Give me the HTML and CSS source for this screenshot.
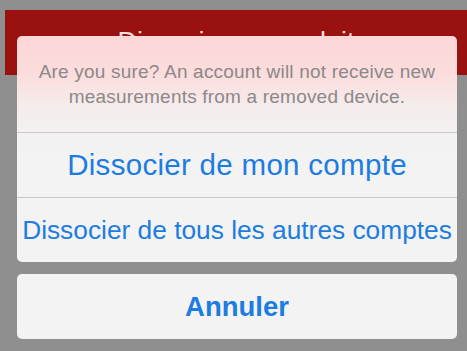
FILE: index.html
```html
<!DOCTYPE html>
<html lang="fr">
<head>
<meta charset="utf-8">
<link rel="stylesheet" href="styles.css">
</head>
<body>
<div class="screen">
  <header class="navbar"><span class="nav-title">Dissocier ce produit</span></header>
  <div class="sheet">
    <div class="group">
      <p class="message">Are you sure? An account will not receive new measurements from a removed device.</p>
      <div class="action">Dissocier de mon compte</div>
      <div class="action action-long">Dissocier de tous les autres comptes</div>
    </div>
    <div class="group cancel">
      <div class="action action-bold">Annuler</div>
    </div>
  </div>
</div>
</body>
</html>
```
FILE: styles.css
```css
html, body {
  margin: 0;
  padding: 0;
}
body {
  width: 467px;
  height: 351px;
  overflow: hidden;
  background: #8f8f8f;
  font-family: "Liberation Sans", Arial, sans-serif;
}
.screen {
  position: relative;
  height: 351px;
  padding-top: 10px;
  box-sizing: border-box;
}
.navbar {
  margin-left: 5px;
  height: 65px;
  background: #9a1210;
  display: flex;
  align-items: center;
  justify-content: center;
}
.nav-title {
  color: #f4dede;
  font-size: 27px;
}
.sheet {
  position: absolute;
  left: 17px;
  top: 36px;
  width: 440px;
  display: flex;
  flex-direction: column;
  gap: 12px;
}
.group {
  border-radius: 5px;
  overflow: hidden;
  background: #f3f3f3;
}
.group:first-child {
  background: linear-gradient(to bottom, #fdd6d6 0px, #fbdcdc 38px, #f6eaea 65px, #f3f1f1 95px, #f3f3f3 130px);
}
.message {
  margin: 0;
  padding: 23px 6px 23px;
  height: 50px;
  text-align: center;
  color: #8c8888;
  font-size: 19px;
  letter-spacing: 0.2px;
  line-height: 25px;
}
.action {
  height: 65px;
  border-top: 1px solid #c9c9c9;
  box-sizing: border-box;
  display: flex;
  align-items: center;
  justify-content: center;
  color: #1c7ce0;
  font-size: 29.5px;
  letter-spacing: 0.3px;
  white-space: nowrap;
}
.action-long {
  font-size: 26.3px;
  letter-spacing: 0;
}
.cancel .action {
  border-top: none;
}
.action-bold {
  font-weight: bold;
  letter-spacing: 0;
  font-size: 27.5px;
}
```
